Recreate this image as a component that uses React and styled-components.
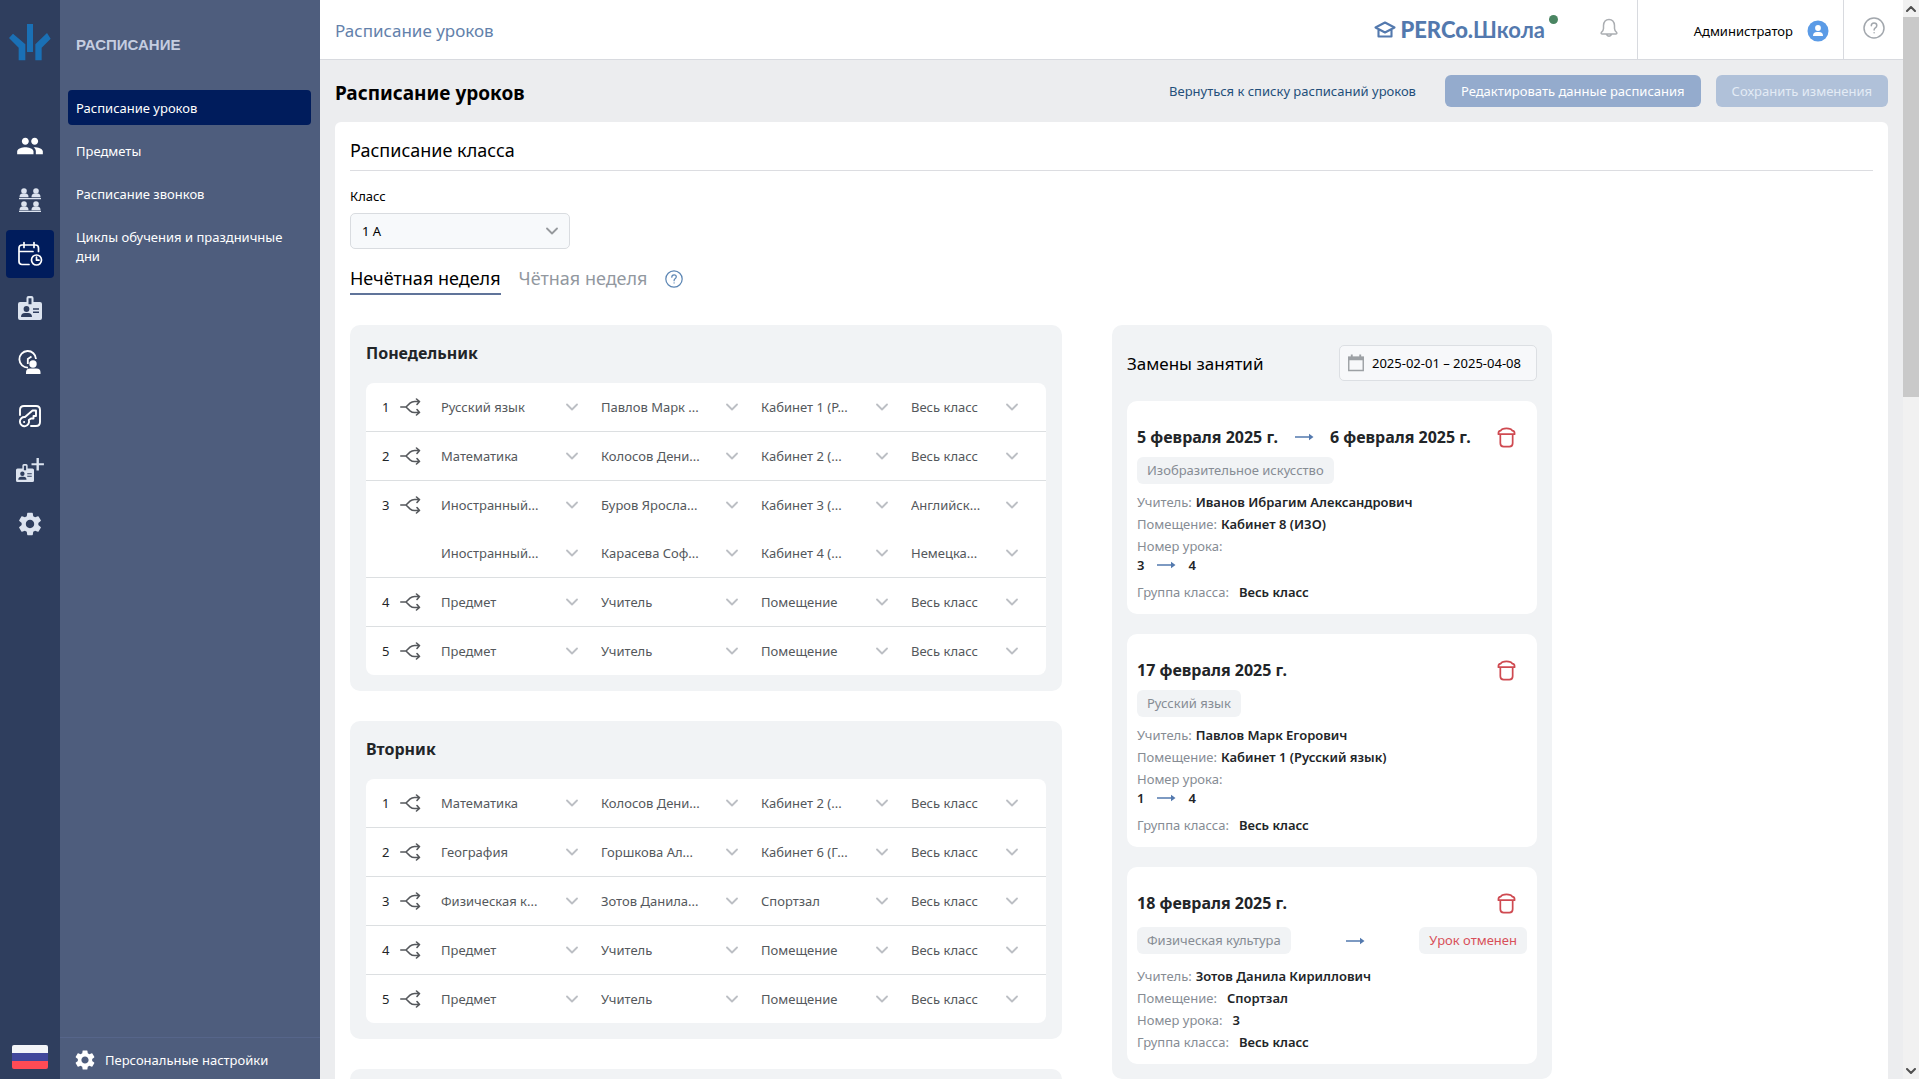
import React from 'react';
import styled, { createGlobalStyle } from 'styled-components';
import { MdPeople, MdSettings } from 'react-icons/md';

const GlobalStyle = createGlobalStyle`
    * {
        box-sizing: border-box;
    }
    body {
        margin: 0;
        font-family: 'Noto Sans', 'Open Sans', sans-serif;
        font-size: 13px;
        color: #000;
    }
    button,
    input,
    select {
        font: inherit;
        color: inherit;
    }
    button {
        padding: 0;
        border: 0;
        background: none;
        cursor: pointer;
    }
    a {
        color: inherit;
        text-decoration: none;
    }
    h1,
    h2,
    h3,
    p {
        margin: 0;
    }
`;

// page frame
const Layout = styled.div`
    display: flex;
    height: 100vh;
    overflow: hidden;
    background: #ecedef;
`;

const Rail = styled.nav`
    display: flex;
    flex-direction: column;
    align-items: center;
    flex: 0 0 60px;
    padding: 24px 0 10px;
    background: #2f3e5e;
`;

const RailList = styled.div`
    display: flex;
    flex-direction: column;
    gap: 6px;
    margin-top: 61px;
`;

const RailButton = styled.button`
    display: flex;
    align-items: center;
    justify-content: center;
    width: 48px;
    height: 48px;
    border-radius: 4px;
    color: ${(p) => (p.$bright ? '#fff' : '#dce3ef')};
    background: ${(p) => (p.$active ? '#001c5c' : 'transparent')};
`;

const Flag = styled.button`
    width: 36px;
    height: 24px;
    margin-top: auto;
    border-radius: 2px;
    background: linear-gradient(#f3f4f8 33%, #41479b 33% 66%, #ff4b55 66%);
`;

const Side = styled.aside`
    display: flex;
    flex-direction: column;
    flex: 0 0 260px;
    background: #4e5d7d;
    color: #fff;
`;

const SideTitle = styled.h2`
    padding: 36px 16px 0;
    font: bold 15px/18px 'Liberation Sans', Arial, sans-serif;
    color: #c5cde0;
`;

const SideMenu = styled.nav`
    display: flex;
    flex-direction: column;
    gap: 8px;
    padding: 36px 9px 0 8px;
`;

const SideLink = styled.a`
    padding: 9px 8px 7px;
    border-radius: 4px;
    line-height: 19px;
    background: ${(p) => (p.$active ? '#001c5c' : 'transparent')};
`;

const SideFooter = styled.a`
    display: flex;
    align-items: center;
    gap: 8px;
    height: 42px;
    margin-top: auto;
    padding: 2px 13px 0;
    border-top: 1px solid #56658a;
`;

const Page = styled.div`
    display: flex;
    flex-direction: column;
    flex: 1;
    min-width: 0;
`;

const Header = styled.header`
    display: flex;
    flex: 0 0 60px;
    align-items: stretch;
    padding-left: 15px;
    border-bottom: 1px solid #d8dadf;
    background: #fff;
`;

const Crumb = styled.a`
    align-self: center;
    margin-right: auto;
    padding-top: 2px;
    font-size: 17px;
    color: #6381ab;
`;

const Brand = styled.a`
    display: flex;
    align-items: center;
    gap: 4px;
    font: 700 22px/28px Lato, sans-serif;
    color: #5379ae;

    b {
        font-weight: 900;
    }
`;

const StatusDot = styled.span`
    width: 9px;
    height: 9px;
    margin-bottom: 20px;
    border-radius: 50%;
    background: #4a8562;
`;

const BellButton = styled.button`
    width: 56px;
    margin-left: 23px;
    color: #abaeb2;
`;

const UserCell = styled.button`
    display: flex;
    align-items: center;
    justify-content: flex-end;
    gap: 14px;
    width: 206px;
    padding: 2px 14px 0 0;
    border-left: 1px solid #d8dadf;
`;

const HelpCell = styled.button`
    width: 60px;
    border-left: 1px solid #d8dadf;
    color: #a2a7ad;
`;

const Scroll = styled.main`
    flex: 1;
    min-height: 0;
    padding: 15px;
    overflow-y: auto;
    scrollbar-width: none;
`;

const TitleRow = styled.div`
    display: flex;
    align-items: center;
    gap: 15px;
    height: 32px;
    margin-bottom: 15px;

    h1 {
        margin-right: auto;
        padding-top: 3px;
        font-size: 19px;
    }
`;

const BackLink = styled.a`
    margin-right: 14px;
    color: #234f7a;
`;

const ActionButton = styled.button`
    height: 32px;
    padding: 0 16px;
    border-radius: 6px;
    background: ${(p) => (p.disabled ? '#b0c1d9' : '#94abcd')};
    color: ${(p) => (p.disabled ? '#e3ebf5' : '#fff')};
`;

const Sheet = styled.section`
    padding: 15px 15px 30px;
    border-radius: 6px;
    background: #fff;
`;

const SheetTitle = styled.h2`
    padding-bottom: 6px;
    border-bottom: 1px solid #dcdde1;
    font-size: 18px;
    font-weight: 400;
    line-height: 27px;
`;

const ClassField = styled.div`
    display: flex;
    flex-direction: column;
    gap: 7px;
    width: 220px;
    margin-top: 15px;
    line-height: 20px;
`;

const SelectBox = styled.span`
    display: grid;
    grid-template-columns: minmax(0, 1fr) 24px;
    align-items: center;
    height: ${(p) => (p.$boxed ? 36 : 24)}px;
    padding: ${(p) => (p.$boxed ? '0 5px 0 0' : '0')};
    border: ${(p) => (p.$boxed ? '1px solid #d9dce0' : '0')};
    border-radius: 5px;
    background: ${(p) => (p.$boxed ? '#f7f9fb' : 'transparent')};
    color: ${(p) => (p.$boxed ? '#000' : '#54585c')};

    select {
        grid-area: 1 / 1 / 2 / 3;
        width: 100%;
        height: 100%;
        padding: ${(p) => (p.$boxed ? '0 24px 0 11px' : '0 24px 0 0')};
        border: 0;
        background: none;
        appearance: none;
    }
    svg {
        grid-area: 1 / 2 / 2 / 3;
        justify-self: center;
        color: ${(p) => (p.$boxed ? '#96999d' : '#bcbfc4')};
        pointer-events: none;
    }
`;

const Tabs = styled.div`
    display: flex;
    align-items: center;
    gap: 18px;
    height: 32px;
    margin: 14px 0 30px;
`;

const Tab = styled.button`
    height: 32px;
    border-bottom: 2px solid ${(p) => (p['aria-selected'] ? '#60749a' : 'transparent')};
    font-size: 18px;
    color: ${(p) => (p['aria-selected'] ? '#000' : '#92989f')};
`;

const HintButton = styled.button`
    height: 18px;
    color: #5c86b4;
`;

const Columns = styled.div`
    display: flex;
    align-items: flex-start;
    gap: 50px;
`;

const DayList = styled.div`
    display: flex;
    flex-direction: column;
    flex: 0 0 712px;
    gap: 30px;
`;

// timetable of one day
const Panel = styled.section`
    padding: 16px;
    border-radius: 10px;
    background: #f1f3f5;

    h3 {
        margin-bottom: 18px;
        font-size: 16px;
        line-height: 24px;
        color: #222528;
    }
`;

const Lessons = styled.table`
    width: 100%;
    table-layout: fixed;
    border-spacing: 0;
    border-radius: 8px;
    background: #fff;
`;

const Cell = styled.td`
    height: ${(p) => (p.$line ? 49 : 48)}px;
    padding: 0 ${(p) => p.$right || 0}px 0 ${(p) => p.$left || 0}px;
    border-bottom: ${(p) => (p.$line ? '1px solid #dcdfe1' : '0')};
    color: #222528;
`;

const SplitButton = styled.button`
    display: block;
    color: #55585c;

    svg {
        display: block;
    }
`;

// substitutions column
const Swaps = styled.section`
    display: flex;
    flex-direction: column;
    flex: 0 0 440px;
    gap: 20px;
    min-width: 0;
    padding: 20px 15px 15px;
    border-radius: 10px;
    background: #f1f3f5;
`;

const SwapsHead = styled.div`
    display: flex;
    align-items: center;
    justify-content: space-between;

    h2 {
        font-size: 17px;
        font-weight: 400;
    }
`;

const DateField = styled.label`
    display: flex;
    align-items: center;
    gap: 8px;
    width: 198px;
    height: 36px;
    padding: 0 8px;
    border: 1px solid #dcdfe3;
    border-radius: 5px;
    background: #f7f8fa;

    input {
        width: 156px;
        padding: 0;
        border: 0;
        background: none;
    }
`;

const SwapCard = styled.article`
    padding: 24px 10px 11px;
    border-radius: 10px;
    background: #fff;
    color: #222528;
`;

const SwapTitle = styled.div`
    display: flex;
    align-items: center;
    gap: 16px;
    height: 24px;

    h3 {
        font-size: 16px;
        white-space: nowrap;
    }
    button {
        display: flex;
        justify-content: flex-end;
        width: 20px;
        margin: 0 11px 0 auto;
        color: #cf4a51;
    }
`;

const TagRow = styled.div`
    display: flex;
    align-items: center;
    justify-content: space-between;
    padding: ${(p) => (p.$roomy ? '12px 0 11px' : '8px 0 7px')};
`;

const Tag = styled.span`
    padding: 0 10px;
    border-radius: 6px;
    line-height: 27px;
    background: #f1f3f5;
    color: ${(p) => (p.$cancelled ? '#d8505a' : '#868c94')};
`;

const Fact = styled.p`
    display: flex;
    gap: ${(p) => (p.$wide ? 10 : 4)}px;
    line-height: 22px;
    color: #868c94;

    b {
        font-weight: 600;
        color: #222528;
    }
`;

const Shift = styled.p`
    display: flex;
    align-items: center;
    gap: 12px;
    height: 16px;
    margin-bottom: 8px;
    font-weight: 600;
`;

// window scrollbar
const Bar = styled.div`
    display: flex;
    flex-direction: column;
    flex: 0 0 16px;
    background: #f1f1f1;
    color: #505050;
`;

const BarArrow = styled.button`
    height: 17px;
    line-height: 0;
`;

const BarThumb = styled.div`
    height: 380px;
    margin-bottom: auto;
    background: #c9c9c9;
`;

const Stroke = ({ w, h, box, width = 2, children }) => (
    <svg
        width={w}
        height={h}
        viewBox={box}
        fill="none"
        stroke="currentColor"
        strokeWidth={width}
        strokeLinecap="round"
        strokeLinejoin="round"
        aria-hidden="true"
    >
        {children}
    </svg>
);

const LogoMark = () => (
    <svg width="42" height="37" viewBox="0 0 126 111" fill="#1a70b5" aria-hidden="true">
        <path d="M54 0h18v84H54zM12 29l37 32v48H29V71L0 42zM114 27L79 61v48h19V71l27-27z" />
    </svg>
);

const ClassIcon = () => (
    <svg width="24" height="24" viewBox="0 0 24 24" fill="currentColor" aria-hidden="true">
        {[0, 13].map((y) =>
            [6, 18].map((x) => (
                <g key={`${x}-${y}`}>
                    <circle cx={x} cy={y + 3} r="2.8" />
                    <path d={`M${x - 4.5} ${y + 9.2}q0-3.6 3-3.6h3q3 0 3 3.6z`} />
                </g>
            ))
        )}
        <path d="M1 10h22v1.2H1zM1 22.8h22V24H1z" />
    </svg>
);

const CalendarClockIcon = () => (
    <Stroke w={26} h={26} box="0 0 26 26" width={1.7}>
        <path d="M12 23.5H5Q2 23.5 2 20.5V7Q2 4 5 4h13.500q3 0 3 3v3.500M2 10.500h14M7 1.500v5M17 1.500v5" />
        <circle cx="19.500" cy="19" r="5" />
        <path d="M19.500 16v3.200h2.500" />
    </Stroke>
);

const BadgeShape = () => (
    <>
        <path
            fillRule="evenodd"
            d="M2 6h6.500V2q0-2 2-2h3q2 0 2 2v4H22q2 0 2 2v14q0 2-2 2H2q-2 0-2-2V8q0-2 2-2zM10.500 2.200v6h3v-6z"
        />
        <g fill="#2f3e5e">
            <circle cx="8.500" cy="13" r="2.900" />
            <path d="M3 21q0-4 4-4h3q4 0 4 4zM15 12.200h6v1.500h-6zM15 15.500h6V17h-6z" />
        </g>
    </>
);

const BadgeIcon = () => (
    <svg width="24" height="24" viewBox="0 0 24 24" fill="currentColor" aria-hidden="true">
        <BadgeShape />
    </svg>
);

const BadgePlusIcon = () => (
    <svg width="28" height="24" viewBox="0 0 28 24" fill="currentColor" aria-hidden="true">
        <g transform="translate(0 6) scale(.75)">
            <BadgeShape />
        </g>
        <path d="M20.500 0h2.400v5.200h5v2h-5v5.200h-2.400V7.200h-5v-2h5z" />
    </svg>
);

const ClockPersonIcon = () => (
    <svg width="24" height="24" viewBox="0 0 24 24" fill="currentColor" aria-hidden="true">
        <g fill="none" stroke="currentColor" strokeWidth="1.800">
            <path d="M10 17.600A8.300 8.300 0 1 1 18 9" />
            <path d="M13.500 6.500L9.800 9v5" />
        </g>
        <circle cx="15" cy="14" r="3.700" />
        <path d="M8 24v-1.500q0-4 4-4h6.500q4 0 4 4V24z" />
    </svg>
);

const KeyIcon = () => (
    <Stroke w={24} h={24} box="0 0 24 24" width={1.9}>
        <path d="M2 11V6q0-4 4-4h12q4 0 4 4v12q0 4-4 4h-5" />
        <path d="M10.800 16A4.600 4.600 0 1 1 7 13l7.500-6.500H18V12h-2.500v2.500H13z" />
        <path d="M6 18h.2" />
    </Stroke>
);

const CapIcon = () => (
    <Stroke w={22} h={17} box="0 0 22 17" width={2.1}>
        <path d="M1.500 6.500L11 1.500l9.500 5-9.500 5zM4.500 8.500v7h13v-7" />
    </Stroke>
);

const BellIcon = () => (
    <Stroke w={18} h={20} box="0 0 18 20" width={1.5}>
        <path d="M9 1.500q5 0 5.500 6v3q0 2 2.200 4 .6 1.500-1 1.500H2.300q-1.600 0-1-1.500 2.200-2 2.200-4v-3q.5-6 5.500-6zM6.500 16.500q2.500 3.500 5 0" />
    </Stroke>
);

const QuestionIcon = ({ size }) => (
    <Stroke w={size} h={size} box="0 0 22 22" width={1.5}>
        <circle cx="11" cy="11" r="10" />
        <path d="M8.300 8.800q0-2.800 2.800-2.800 2.700 0 2.700 2.400 0 1.400-1.500 2.400-1.200.8-1.200 2.200M11.100 15.700v.1" />
    </Stroke>
);

const AvatarIcon = () => (
    <svg width="22" height="22" viewBox="0 0 22 22" aria-hidden="true">
        <circle cx="11" cy="11" r="10.500" fill="#5b9be6" />
        <circle cx="11" cy="8" r="2.900" fill="#fff" />
        <path d="M6 16q0-4 4-4h2q4 0 4 4z" fill="#fff" />
    </svg>
);

const Chevron = () => (
    <Stroke w={12} h={8} box="0 0 12 8" width={1.8}>
        <path d="M1 1.500l5 5 5-5" />
    </Stroke>
);

const SplitIcon = () => (
    <Stroke w={21} h={18} box="0 0 21 18" width={1.6}>
        <path d="M.8 9H6l4-3.800q2-1.700 4.500-1.700h5M6 9l4 3.800q2 1.700 4.500 1.700h5M16.500 1l3 2.500-2.500 3M17 11.500l2.500 3-3 2.500" />
    </Stroke>
);

const ArrowIcon = () => (
    <svg width="20" height="8" viewBox="0 0 20 8" fill="#5379ae" aria-hidden="true">
        <path d="M1 3.200h14V.800L19.500 4 15 7.200V4.800H1z" />
    </svg>
);

const TrashIcon = () => (
    <Stroke w={19} h={21} box="0 0 20 22" width={1.8}>
        <path d="M1.500 7.500v-1q0-2.500 2.500-2.800Q5 1.300 10 1.300t6 2.400q2.500.300 2.500 2.800v1zM3.500 7.500V17q0 3.500 3.500 3.500h6q3.500 0 3.500-3.500V7.500" />
    </Stroke>
);

const CalendarIcon = () => (
    <svg width="17" height="18" viewBox="0 0 17 18" aria-hidden="true">
        <path d="M.800 3h15.400v14H.800z" fill="none" stroke="#9ca0a4" strokeWidth="1.500" />
        <path d="M0 2h17v4H0zM3 0h2v3H3zM12 0h2v3h-2z" fill="#9ca0a4" />
    </svg>
);

const rail = [
    { label: 'Персонал', icon: <MdPeople size={28} />, bright: true },
    { label: 'Классы', icon: <ClassIcon /> },
    { label: 'Расписание', icon: <CalendarClockIcon />, bright: true, active: true },
    { label: 'Бюро пропусков', icon: <BadgeIcon /> },
    { label: 'Учёт времени', icon: <ClockPersonIcon />, bright: true },
    { label: 'Контроль доступа', icon: <KeyIcon />, bright: true },
    { label: 'Заказ пропуска', icon: <BadgePlusIcon /> },
    { label: 'Администрирование', icon: <MdSettings size={28} /> },
];

const menu = ['Расписание уроков', 'Предметы', 'Расписание звонков', 'Циклы обучения и праздничные дни'];

const EMPTY = ['Предмет', 'Учитель', 'Помещение', 'Весь класс'];

const days = [
    {
        name: 'Понедельник',
        lessons: [
            [['Русский язык', 'Павлов Марк ...', 'Кабинет 1 (Р...', 'Весь класс']],
            [['Математика', 'Колосов Дени...', 'Кабинет 2 (...', 'Весь класс']],
            [
                ['Иностранный...', 'Буров Яросла...', 'Кабинет 3 (...', 'Английск...'],
                ['Иностранный...', 'Карасева Соф...', 'Кабинет 4 (...', 'Немецка...'],
            ],
            [EMPTY],
            [EMPTY],
        ],
    },
    {
        name: 'Вторник',
        lessons: [
            [['Математика', 'Колосов Дени...', 'Кабинет 2 (...', 'Весь класс']],
            [['География', 'Горшкова Ал...', 'Кабинет 6 (Г...', 'Весь класс']],
            [['Физическая к...', 'Зотов Данила...', 'Спортзал', 'Весь класс']],
            [EMPTY],
            [EMPTY],
        ],
    },
];

const swaps = [
    {
        from: '5 февраля 2025 г.',
        to: '6 февраля 2025 г.',
        subject: 'Изобразительное искусство',
        teacher: 'Иванов Ибрагим Александрович',
        room: 'Кабинет 8 (ИЗО)',
        lesson: ['3', '4'],
    },
    {
        from: '17 февраля 2025 г.',
        subject: 'Русский язык',
        teacher: 'Павлов Марк Егорович',
        room: 'Кабинет 1 (Русский язык)',
        lesson: ['1', '4'],
    },
    {
        from: '18 февраля 2025 г.',
        subject: 'Физическая культура',
        teacher: 'Зотов Данила Кириллович',
        room: 'Спортзал',
        lesson: ['3'],
        cancelled: true,
    },
];

const Dropdown = ({ id, label, value, boxed }) => (
    <SelectBox $boxed={boxed}>
        <select id={id} aria-label={label} defaultValue={value}>
            <option>{value}</option>
        </select>
        <Chevron />
    </SelectBox>
);

const Day = ({ name, lessons }) => (
    <Panel>
        <h3>{name}</h3>
        <Lessons>
            <colgroup>
                <col width="34" />
                <col width="41" />
                <col width="160" />
                <col width="160" />
                <col width="150" />
                <col />
            </colgroup>
            <tbody>
                {lessons.map((groups, i) =>
                    groups.map((cells, g) => {
                        const line = g === groups.length - 1 && i < lessons.length - 1;
                        return (
                            <tr key={`${i}-${g}`}>
                                <Cell $line={line} $left={16}>
                                    {g === 0 && i + 1}
                                </Cell>
                                <Cell $line={line}>
                                    {g === 0 && (
                                        <SplitButton aria-label="Разделить на группы">
                                            <SplitIcon />
                                        </SplitButton>
                                    )}
                                </Cell>
                                {cells.map((text, c) => (
                                    <Cell key={c} $line={line} $right={c === 3 ? 22 : 17}>
                                        <Dropdown label={EMPTY[c]} value={text} />
                                    </Cell>
                                ))}
                            </tr>
                        );
                    })
                )}
            </tbody>
        </Lessons>
    </Panel>
);

const Swap = ({ from, to, subject, teacher, room, lesson, cancelled }) => (
    <SwapCard>
        <SwapTitle>
            <h3>{from}</h3>
            {to && <ArrowIcon />}
            {to && <h3>{to}</h3>}
            <button aria-label="Удалить замену">
                <TrashIcon />
            </button>
        </SwapTitle>
        <TagRow $roomy={cancelled}>
            <Tag>{subject}</Tag>
            {cancelled && <ArrowIcon />}
            {cancelled && <Tag $cancelled>Урок отменен</Tag>}
        </TagRow>
        <Fact>
            Учитель: <b>{teacher}</b>
        </Fact>
        <Fact $wide={cancelled}>
            Помещение: <b>{room}</b>
        </Fact>
        <Fact $wide>Номер урока: {lesson.length === 1 && <b>{lesson[0]}</b>}</Fact>
        {lesson.length === 2 && (
            <Shift>
                <span>{lesson[0]}</span>
                <ArrowIcon />
                <span>{lesson[1]}</span>
            </Shift>
        )}
        <Fact $wide>
            Группа класса: <b>Весь класс</b>
        </Fact>
    </SwapCard>
);

export default function App() {
    return (
        <>
            <GlobalStyle />
            <Layout>
                <Rail>
                    <LogoMark />
                    <RailList>
                        {rail.map(({ label, icon, bright, active }) => (
                            <RailButton key={label} aria-label={label} $bright={bright} $active={active}>
                                {icon}
                            </RailButton>
                        ))}
                    </RailList>
                    <Flag aria-label="Русский" />
                </Rail>
                <Side>
                    <SideTitle>РАСПИСАНИЕ</SideTitle>
                    <SideMenu>
                        {menu.map((text, i) => (
                            <SideLink key={text} href="#" $active={i === 0}>
                                {text}
                            </SideLink>
                        ))}
                    </SideMenu>
                    <SideFooter href="#">
                        <MdSettings size={24} />
                        Персональные настройки
                    </SideFooter>
                </Side>
                <Page>
                    <Header>
                        <Crumb href="#">Расписание уроков</Crumb>
                        <Brand href="#">
                            <CapIcon />
                            <span>
                                <b>PERCo.</b>Школа
                            </span>
                            <StatusDot />
                        </Brand>
                        <BellButton aria-label="Уведомления">
                            <BellIcon />
                        </BellButton>
                        <UserCell>
                            Администратор
                            <AvatarIcon />
                        </UserCell>
                        <HelpCell aria-label="Справка">
                            <QuestionIcon size={22} />
                        </HelpCell>
                    </Header>
                    <Scroll>
                        <TitleRow>
                            <h1>Расписание уроков</h1>
                            <BackLink href="#">Вернуться к списку расписаний уроков</BackLink>
                            <ActionButton>Редактировать данные расписания</ActionButton>
                            <ActionButton disabled>Сохранить изменения</ActionButton>
                        </TitleRow>
                        <Sheet>
                            <SheetTitle>Расписание класса</SheetTitle>
                            <ClassField>
                                <label htmlFor="class">Класс</label>
                                <Dropdown id="class" value="1 А" boxed />
                            </ClassField>
                            <Tabs role="tablist">
                                <Tab role="tab" aria-selected={true}>
                                    Нечётная неделя
                                </Tab>
                                <Tab role="tab" aria-selected={false}>
                                    Чётная неделя
                                </Tab>
                                <HintButton aria-label="Подсказка">
                                    <QuestionIcon size={18} />
                                </HintButton>
                            </Tabs>
                            <Columns>
                                <DayList>
                                    {days.map((day) => (
                                        <Day key={day.name} {...day} />
                                    ))}
                                    <Panel />
                                </DayList>
                                <Swaps>
                                    <SwapsHead>
                                        <h2>Замены занятий</h2>
                                        <DateField>
                                            <CalendarIcon />
                                            <input
                                                aria-label="Период"
                                                readOnly
                                                value="2025-02-01 – 2025-04-08"
                                            />
                                        </DateField>
                                    </SwapsHead>
                                    {swaps.map((swap) => (
                                        <Swap key={swap.from} {...swap} />
                                    ))}
                                </Swaps>
                            </Columns>
                        </Sheet>
                    </Scroll>
                </Page>
                <Bar>
                    <BarArrow aria-label="Вверх" tabIndex={-1}>
                        <Stroke w={10} h={6} box="0 0 10 6">
                            <path d="M1 5l4-4 4 4" />
                        </Stroke>
                    </BarArrow>
                    <BarThumb />
                    <BarArrow aria-label="Вниз" tabIndex={-1}>
                        <Stroke w={10} h={6} box="0 0 10 6">
                            <path d="M1 1l4 4 4-4" />
                        </Stroke>
                    </BarArrow>
                </Bar>
            </Layout>
        </>
    );
}
